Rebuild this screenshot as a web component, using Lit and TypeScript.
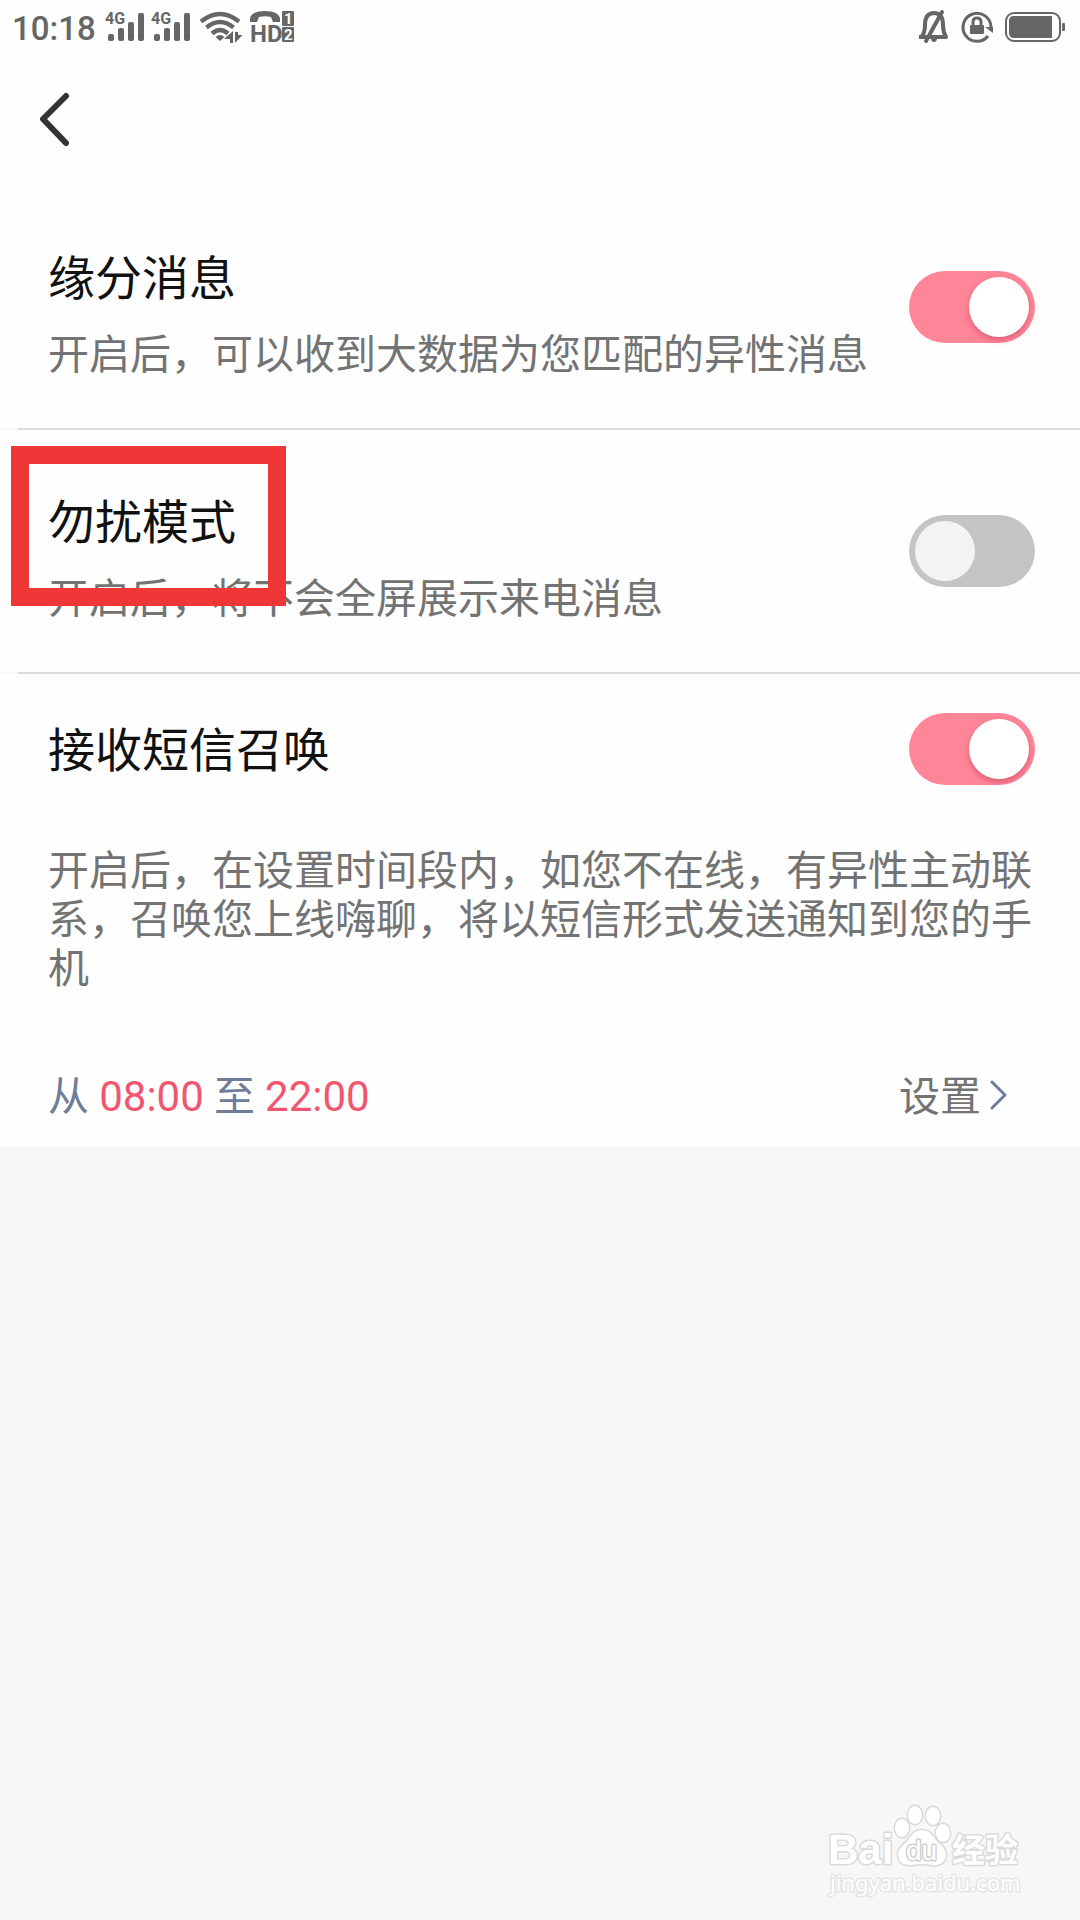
import { LitElement, html, css, svg, nothing } from "lit";
import { customElement, property, state } from "lit/decorators.js";

interface ToggleSetting {
  id: string;
  title: string;
  description: string;
  on: boolean;
  marked?: boolean;
}

@customElement("toggle-switch")
class ToggleSwitch extends LitElement {
  static styles = css`
    :host {
      display: block;
      flex: none;
    }
    .switch {
      appearance: none;
      display: flex;
      align-items: center;
      box-sizing: border-box;
      width: 126px;
      height: 72px;
      margin: 0;
      padding: 6px;
      border-radius: 36px;
      background: #c4c4c4;
      cursor: pointer;
    }
    .switch::before {
      content: "";
      width: 60px;
      height: 60px;
      border-radius: 50%;
      background: #f3f3f3;
    }
    .switch:checked {
      justify-content: flex-end;
      background: #ff8699;
    }
    .switch:checked::before {
      background: #fff;
      box-shadow: 0 3px 6px rgba(150, 20, 50, 0.35);
    }
  `;

  @property() label = "";
  @property({ type: Boolean }) checked = false;

  render() {
    return html`<input
      class="switch"
      type="checkbox"
      role="switch"
      aria-label=${this.label}
      .checked=${this.checked}
      @change=${(e: Event) => {
        this.checked = (e.target as HTMLInputElement).checked;
      }}
    />`;
  }
}

@customElement("status-bar")
class StatusBar extends LitElement {
  static styles = css`
    :host {
      display: flex;
      justify-content: space-between;
      align-items: flex-start;
      height: 54px;
      padding: 0 12px;
      color: #666;
      font-family: Roboto, "Noto Sans CJK SC", sans-serif;
    }
    .group {
      display: flex;
    }
    .time {
      width: 92px;
      font-size: 33px;
      line-height: 58px;
      font-weight: 500;
    }
    .icon {
      display: block;
      height: 54px;
      fill: #666;
    }
    .small {
      font-size: 16px;
      font-weight: 700;
    }
    .hd {
      font-family: "Liberation Sans Narrow", Roboto, sans-serif;
      font-size: 24px;
      font-weight: 700;
    }
    .digit {
      font-size: 15px;
      font-weight: 700;
      fill: #fff;
    }
  `;

  private signal() {
    return html`<svg class="icon" width="46" height="54" viewBox="0 0 46 54" aria-hidden="true">
      ${svg`<text class="small" x="1" y="24">4G</text>
      <rect x="4" y="34" width="6" height="7" rx="2"/>
      <rect x="14" y="28" width="6" height="13" rx="2"/>
      <rect x="24" y="22" width="6" height="19" rx="2"/>
      <rect x="34" y="13" width="6" height="28" rx="2"/>`}
    </svg>`;
  }

  render() {
    return html`
      <div class="group">
        <span class="time">10:18</span>
        ${this.signal()} ${this.signal()}
        <svg class="icon" width="54" height="54" viewBox="0 0 54 54" aria-hidden="true">
          <g fill="none" stroke="#666" stroke-width="4.4">
            <path d="M5 21.5 Q24 6.5 43 21.5" />
            <path d="M10.5 27.5 Q24 16.5 37.5 27.5" />
            <path d="M16 33.5 Q24 26.5 32 33.5" />
          </g>
          <path d="M19.5 37 Q24 33 28.5 37 L24 41Z" />
          <path d="M37 31V43H34V39H28Z M39 32V43L46.500 35H42V32Z" />
        </svg>
        <svg class="icon" width="48" height="54" viewBox="0 0 48 54" aria-hidden="true">
          <path d="M0 22 V18 Q2 11 15 11 Q28 11 30 18 V22 H23 L21 17 Q15 15.500 9 17 L7 22Z" />
          <text class="hd" x="0" y="42">HD</text>
          <rect x="32" y="11" width="12" height="15" rx="1" />
          <rect x="32" y="27" width="12" height="15" rx="1" />
          <text class="digit" x="34" y="24">1</text>
          <text class="digit" x="34" y="40">2</text>
        </svg>
      </div>
      <div class="group">
        <svg class="icon" width="45" height="54" viewBox="0 0 45 54" aria-hidden="true">
          <path
            d="M8 36 Q11 32 11 25 Q11 13 20 13 Q29 13 29 25 Q29 32 32 37 H5"
            fill="none"
            stroke="#666"
            stroke-width="4"
            stroke-linejoin="round"
          />
          <path d="M12 41 L28 12" stroke="#666" stroke-width="4" stroke-linecap="round" />
          <path d="M17 38 H23 Q23 42 20 42 Q17 42 17 38Z" />
        </svg>
        <svg class="icon" width="46" height="54" viewBox="0 0 46 54" aria-hidden="true">
          <path
            d="M32 27 A14 14 0 1 0 29 36"
            fill="none"
            stroke="#666"
            stroke-width="3"
          />
          <path d="M26 27 H34 V33Z" />
          <rect x="11" y="25" width="14" height="9" rx="1" />
          <path d="M14 26 V22 Q14 18 18 18 Q22 18 22 22 V26" fill="none" stroke="#666" stroke-width="3" />
        </svg>
        <svg class="icon" width="63" height="54" viewBox="0 0 63 54" aria-hidden="true">
          <rect x="1" y="13" width="54" height="28" rx="8" fill="none" stroke="#666" stroke-width="2" />
          <path d="M9 16 H47 V38 H9 Q4 38 4 33 V21 Q4 16 9 16Z" />
          <rect x="57" y="23" width="3" height="8" rx="1" />
        </svg>
      </div>
    `;
  }
}

@customElement("app-root")
class AppRoot extends LitElement {
  static styles = css`
    :host {
      display: flex;
      flex-direction: column;
      min-height: 100vh;
      background: #f7f7f7;
      color: #737373;
      font-family: Roboto, "Noto Sans CJK SC", sans-serif;
      font-size: 41px;
      line-height: 49px;
    }
    .panel {
      background: #fefefe;
    }
    .header {
      display: flex;
      align-items: center;
      height: 132px;
      padding: 0 24px;
    }
    .back {
      display: flex;
      padding: 12px;
      border: 0;
      background: none;
      cursor: pointer;
    }
    .row {
      position: relative;
      display: flex;
      align-items: center;
      justify-content: space-between;
      gap: 40px;
      padding: 0 45px 0 48px;
    }
    .text {
      display: flex;
      flex-direction: column;
      gap: 24px;
      padding: 65px 0 48px;
    }
    .title {
      margin: 0;
      color: #111;
      font-size: 47px;
      line-height: 56px;
      font-weight: 400;
    }
    .desc {
      margin: 0;
    }
    .divider {
      height: 2px;
      margin: 0;
      border: 0;
      border-left: 18px solid #f7f7f7;
      background: #dcdcdc;
    }
    .mark {
      position: absolute;
      top: 16px;
      left: 11px;
      box-sizing: border-box;
      width: 275px;
      height: 160px;
      border: 18px solid #ef3737;
      pointer-events: none;
    }
    .summon {
      min-height: 150px;
    }
    .summon .title {
      padding-top: 4px;
    }
    .note {
      margin: 0;
      padding: 23px 45px 79px 48px;
    }
    .period {
      display: flex;
      align-items: center;
      justify-content: space-between;
      padding: 0 72px 25px 48px;
      color: #6f7d9b;
    }
    .hour {
      color: #f0566f;
      font-size: 42px;
      line-height: 1;
    }
    .set {
      display: flex;
      align-items: center;
      gap: 9px;
      padding: 0;
      border: 0;
      background: none;
      color: #737373;
      font: inherit;
      cursor: pointer;
    }
    .footer {
      display: flex;
      flex: 1;
      align-items: flex-end;
      justify-content: flex-end;
      padding: 0 54px 20px;
    }
    .brand {
      fill: #fff;
      stroke: #dadada;
      stroke-width: 3px;
      stroke-linejoin: round;
      paint-order: stroke;
      font-family: "Liberation Sans", sans-serif;
      font-weight: 700;
      font-size: 42px;
    }
    .brand-cn {
      font-family: "Noto Sans CJK SC", sans-serif;
      font-size: 33px;
    }
    .brand-du {
      font-size: 28px;
      font-weight: 400;
      stroke: #cfcfcf;
    }
    .brand-url {
      font-family: "Noto Sans", sans-serif;
      font-size: 22px;
      font-weight: 400;
      stroke: #e6e6e6;
    }
  `;

  @state() private settings: ToggleSetting[] = [
    {
      id: "match",
      title: "缘分消息",
      description: "开启后，可以收到大数据为您匹配的异性消息",
      on: true,
    },
    {
      id: "quiet",
      title: "勿扰模式",
      description: "开启后，将不会全屏展示来电消息",
      on: false,
      marked: true,
    },
  ];

  private renderRow(item: ToggleSetting) {
    return html`
      <section class="row">
        <div class="text">
          <h2 class="title">${item.title}</h2>
          <p class="desc">${item.description}</p>
        </div>
        <toggle-switch .label=${item.title} .checked=${item.on}></toggle-switch>
        ${item.marked ? html`<div class="mark"></div>` : nothing}
      </section>
      <hr class="divider" />
    `;
  }

  render() {
    return html`
      <main class="panel">
        <status-bar></status-bar>
        <header class="header">
          <button class="back" aria-label="返回">
            <svg width="36" height="56" viewBox="0 0 36 56" fill="none" stroke="#333" stroke-width="6" stroke-linecap="round" stroke-linejoin="round">
              <path d="M30 4 L7 27 L30 51" />
            </svg>
          </button>
        </header>
        ${this.settings.map((item) => this.renderRow(item))}
        <section class="row summon">
          <h2 class="title">接收短信召唤</h2>
          <toggle-switch .label=${"接收短信召唤"} .checked=${true}></toggle-switch>
        </section>
        <p class="note">开启后，在设置时间段内，如您不在线，有异性主动联系，召唤您上线嗨聊，将以短信形式发送通知到您的手机</p>
        <div class="period">
          <span>从 <span class="hour">08:00</span> 至 <span class="hour">22:00</span></span>
          <button class="set">
            设置
            <svg width="18" height="36" viewBox="0 0 18 36" fill="none" stroke="#6f7d9b" stroke-width="3" stroke-linecap="round" stroke-linejoin="round">
              <path d="M2 2 L15 15 L2 28" />
            </svg>
          </button>
        </div>
      </main>
      <footer class="footer">
        <svg width="202" height="100" viewBox="0 0 202 100" role="img" aria-label="Baidu 经验">
          <g class="brand">
            <text x="4" y="64">Bai</text>
            <ellipse cx="78" cy="28" rx="7" ry="9" />
            <ellipse cx="91" cy="15" rx="7" ry="9" />
            <ellipse cx="109" cy="16" rx="7" ry="9" />
            <ellipse cx="119" cy="33" rx="7" ry="9" />
            <path d="M98 30 C108 30 109 39 117 45 C125 52 123 65 111 65 C104 65 102 64 98 64 C94 64 91 65 85 65 C73 65 71 52 79 45 C87 39 88 30 98 30Z" />
            <text class="brand-du" x="82" y="60">du</text>
            <text class="brand-cn" x="128" y="62">经验</text>
            <text class="brand-url" x="6" y="91">jingyan.baidu.com</text>
          </g>
        </svg>
      </footer>
    `;
  }
}
